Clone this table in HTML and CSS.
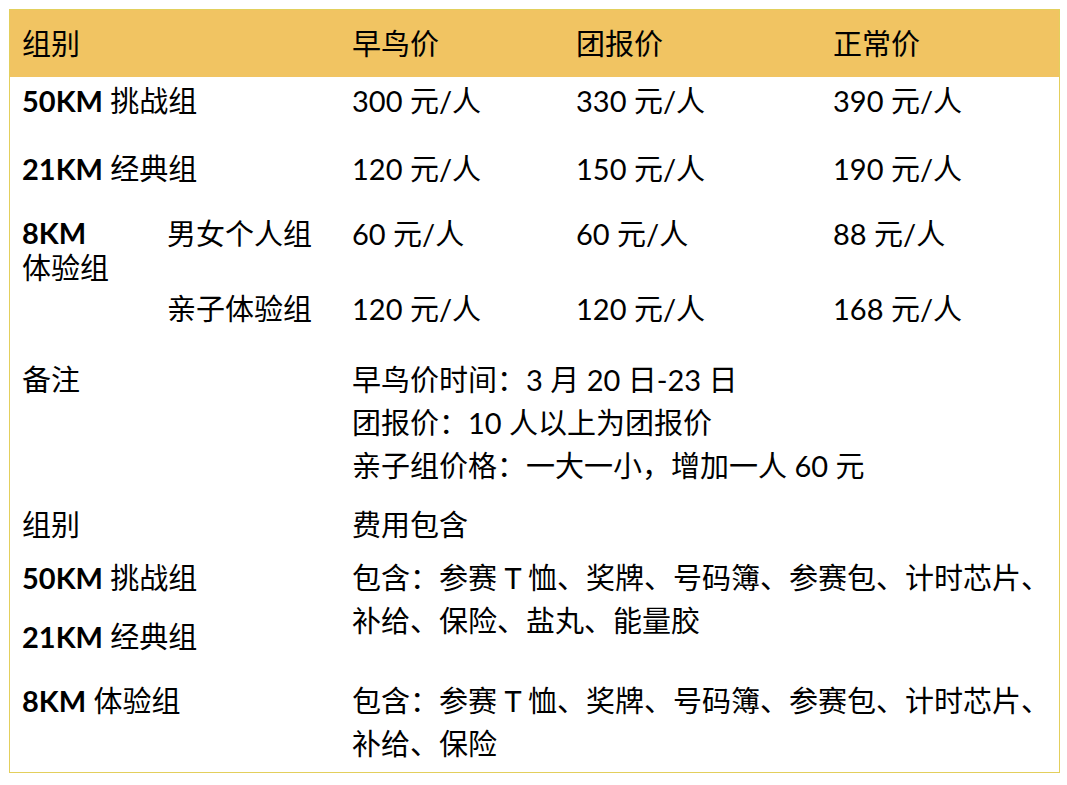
FILE: index.html
```html
<!DOCTYPE html>
<html lang="zh-CN">
<head>
<meta charset="utf-8">
<title>报名费用</title>
<link rel="stylesheet" href="styles.css">
</head>
<body>
<div class="box">
  <div class="head">
    <div class="span2">组别</div>
    <div>早鸟价</div>
    <div>团报价</div>
    <div>正常价</div>
  </div>
  <div class="body">
    <div class="c12 r1"><b>50KM</b> 挑战组</div>
    <div class="c3 r1">300 元/人</div>
    <div class="c4 r1">330 元/人</div>
    <div class="c5 r1">390 元/人</div>

    <div class="c12 r2"><b>21KM</b> 经典组</div>
    <div class="c3 r2">120 元/人</div>
    <div class="c4 r2">150 元/人</div>
    <div class="c5 r2">190 元/人</div>

    <div class="c1 r34 tight"><b>8KM</b><br>体验组</div>
    <div class="c2 r3">男女个人组</div>
    <div class="c3 r3">60 元/人</div>
    <div class="c4 r3">60 元/人</div>
    <div class="c5 r3">88 元/人</div>

    <div class="c2 r4">亲子体验组</div>
    <div class="c3 r4">120 元/人</div>
    <div class="c4 r4">120 元/人</div>
    <div class="c5 r4">168 元/人</div>

    <div class="c12 r5">备注</div>
    <div class="c35 r5">早鸟价时间：3 月 20 日-23 日<br>团报价：10 人以上为团报价<br>亲子组价格：一大一小，增加一人 60 元</div>

    <div class="c12 r6">组别</div>
    <div class="c35 r6">费用包含</div>

    <div class="c12 r7"><b>50KM</b> 挑战组</div>
    <div class="c12 r8"><b>21KM</b> 经典组</div>
    <div class="c35 r78">包含：参赛 T 恤、奖牌、号码簿、参赛包、计时芯片、<br>补给、保险、盐丸、能量胶</div>

    <div class="c12 r9"><b>8KM</b> 体验组</div>
    <div class="c35 r9">包含：参赛 T 恤、奖牌、号码簿、参赛包、计时芯片、<br>补给、保险</div>
  </div>
</div>
</body>
</html>
```

FILE: styles.css
```css
html, body {
  margin: 0;
  padding: 0;
  background: #ffffff;
}
body {
  font-family: "Lato", "Noto Sans CJK SC", sans-serif;
  font-size: 29px;
  color: #000000;
}
.box {
  margin: 9px 0 0 9px;
  width: 1049px;
  height: 762px;
  border: 1px solid #e3cf5c;
  display: flex;
  flex-direction: column;
}
.head {
  height: 67px;
  background: #f1c462;
  display: grid;
  grid-template-columns: 145px 185px 224px 257px 1fr;
  align-items: center;
  padding-left: 12px;
  line-height: 43px;
}
.head .span2 {
  grid-column: 1 / 3;
}
.body {
  flex: 1;
  display: grid;
  grid-template-columns: 145px 185px 224px 257px 1fr;
  grid-template-rows: 68px 65px 75px 71px 145px 53px 59px 64px 1fr;
  padding: 2px 0 0 12px;
  line-height: 43px;
  white-space: nowrap;
}
.body b {
  font-weight: 700;
}
.c1 { grid-column: 1 / 2; }
.c2 { grid-column: 2 / 3; }
.c12 { grid-column: 1 / 3; }
.c3 { grid-column: 3 / 4; }
.c4 { grid-column: 4 / 5; }
.c5 { grid-column: 5 / 6; }
.c35 { grid-column: 3 / 6; }
.r1 { grid-row: 1; }
.r2 { grid-row: 2; }
.r3 { grid-row: 3; }
.r4 { grid-row: 4; }
.r34 { grid-row: 3 / 5; }
.r5 { grid-row: 5; }
.r6 { grid-row: 6; }
.r7 { grid-row: 7; }
.r8 { grid-row: 8; }
.r78 { grid-row: 7 / 9; }
.r9 { grid-row: 9; }
.tight {
  line-height: 35px;
  padding-top: 3px;
}
```
